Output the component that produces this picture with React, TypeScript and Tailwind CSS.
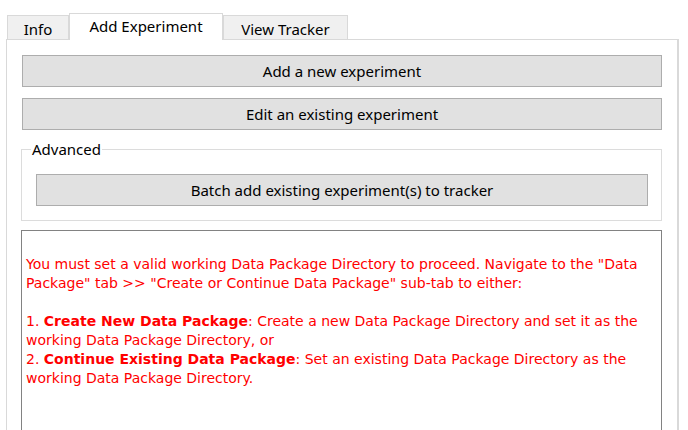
import React from 'react';

const ui = { fontFamily: '"Noto Sans", "Open Sans", sans-serif' };
const msg = { fontFamily: '"DejaVu Sans", Verdana, sans-serif' };

const Tab = ({ label, active, width }: { label: string; active?: boolean; width: string }) =>
  active ? (
    <div
      className={`${width} h-[27px] -mb-px relative z-10 flex items-center justify-center bg-white border border-b-0 border-[#d9d9d9] text-[15px] text-black`}
    >
      <span className="-mt-[1px]">{label}</span>
    </div>
  ) : (
    <div
      className={`${width} h-[24px] flex items-center justify-center bg-[#f0f0f0] border border-b-0 border-[#d9d9d9] text-[15px] text-black`}
    >
      <span className="mt-[3px]">{label}</span>
    </div>
  );

const Button = ({ label, className = '' }: { label: string; className?: string }) => (
  <div
    className={`h-[32px] flex items-center justify-center bg-[#e1e1e1] border border-[#adadad] text-[15px] text-black ${className}`}
  >
    {label}
  </div>
);

export default function App() {
  return (
    <div className="w-[688px] h-[430px] bg-white overflow-hidden" style={ui}>
      <div className="pt-[13px] pl-[7px] flex items-end">
        <Tab label="Info" width="w-[62px]" />
        <Tab label="Add Experiment" active width="w-[154px]" />
        <Tab label="View Tracker" width="w-[125px]" />
      </div>
      <div className="ml-[6px] w-[673px] h-[400px] border border-[#d9d9d9] border-r-2 pt-[15px] pl-[15px] pr-[15px] flex flex-col">
        <Button label="Add a new experiment" className="w-[640px]" />
        <Button label="Edit an existing experiment" className="w-[640px] mt-[11px]" />
        <div className="relative mt-[19px] -ml-px w-[641px] h-[72px] border border-[#dcdcdc]">
          <span className="absolute -top-[11px] left-[9px] bg-white px-[1px] text-[15px] leading-[20px] text-black">
            Advanced
          </span>
          <Button label="Batch add existing experiment(s) to tracker" className="w-[612px] mt-[24px] ml-[14px]" />
        </div>
        <div
          className="mt-[9px] -ml-px w-[641px] flex-1 border border-[#828282] pl-[4px] pt-[24px] text-[14px] leading-[19px] text-[#ff0000]"
          style={msg}
        >
          <p>
            You must set a valid working Data Package Directory to proceed. Navigate to the "Data
            <br />
            Package" tab &gt;&gt; "Create or Continue Data Package" sub-tab to either:
          </p>
          <p className="mt-[19px]">
            1. <b>Create New Data Package</b>: Create a new Data Package Directory and set it as the
            <br />
            working Data Package Directory, or
            <br />
            2. <b>Continue Existing Data Package</b>: Set an existing Data Package Directory as the
            <br />
            working Data Package Directory.
          </p>
        </div>
      </div>
    </div>
  );
}
